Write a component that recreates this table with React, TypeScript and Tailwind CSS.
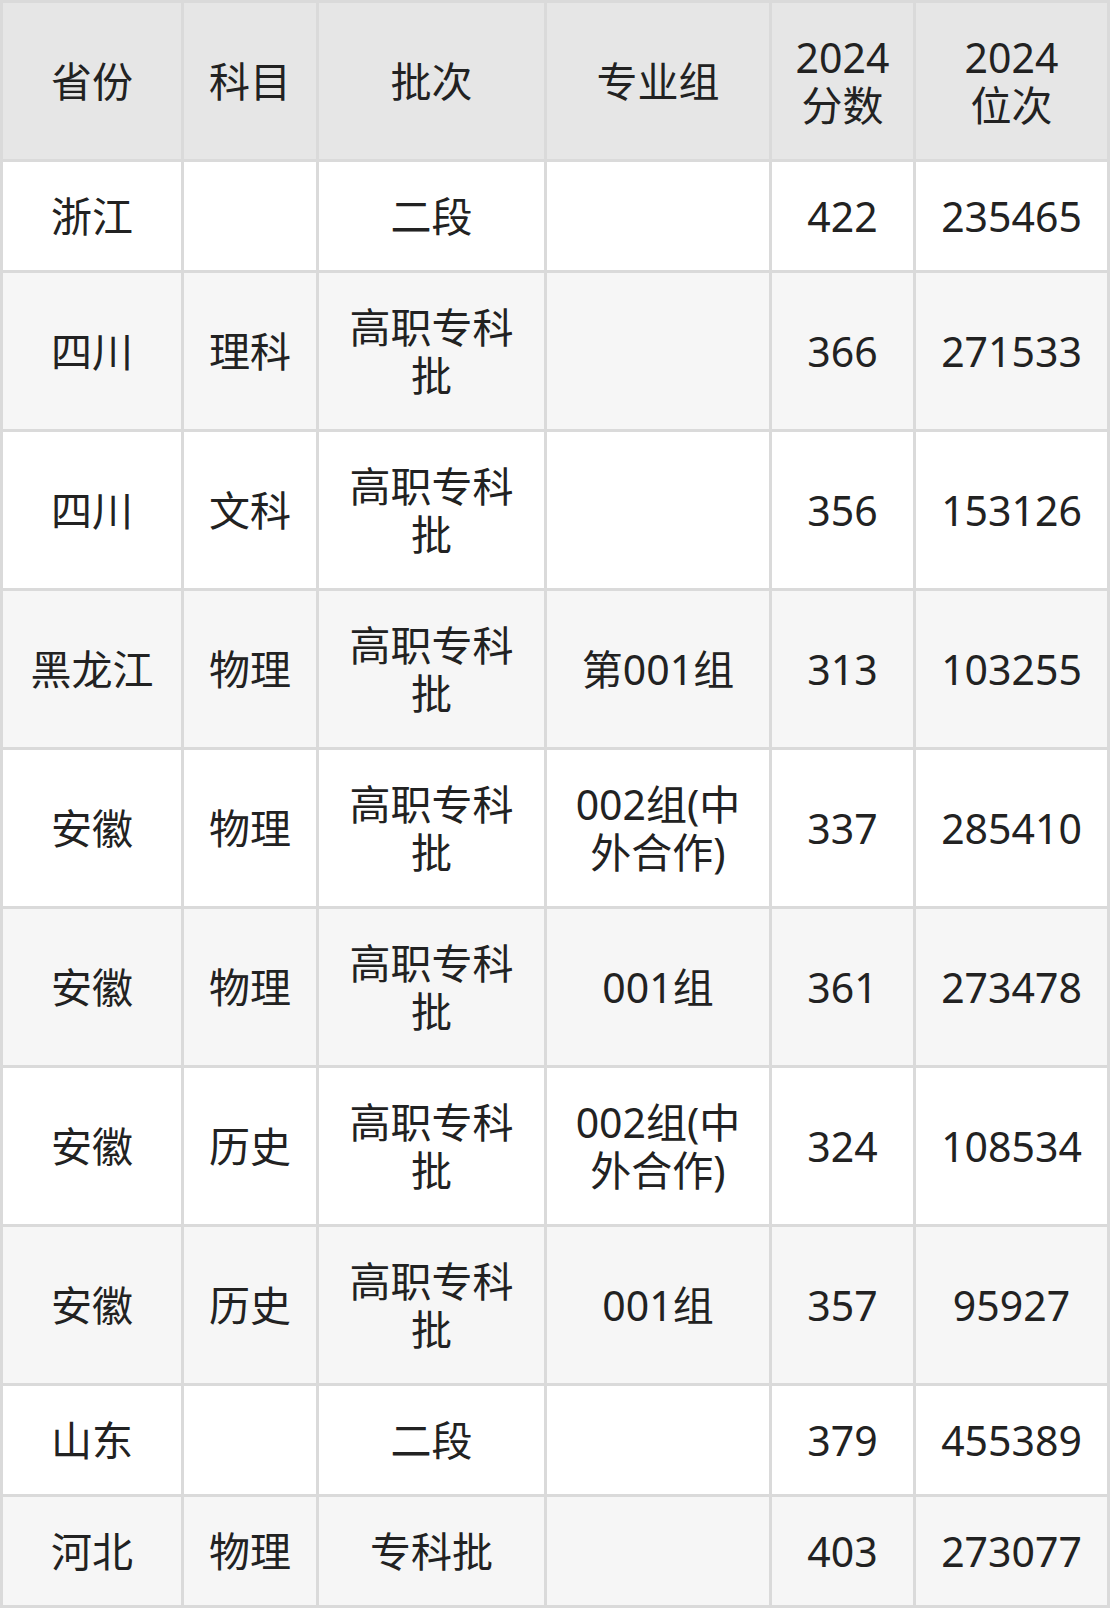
import React from "react";

type Row = { cells: string[][]; tall: boolean };

const header: string[][] = [["省份"], ["科目"], ["批次"], ["专业组"], ["2024", "分数"], ["2024", "位次"]];

const rows: Row[] = [
  { tall: false, cells: [["浙江"], [], ["二段"], [], ["422"], ["235465"]] },
  { tall: true, cells: [["四川"], ["理科"], ["高职专科", "批"], [], ["366"], ["271533"]] },
  { tall: true, cells: [["四川"], ["文科"], ["高职专科", "批"], [], ["356"], ["153126"]] },
  { tall: true, cells: [["黑龙江"], ["物理"], ["高职专科", "批"], ["第001组"], ["313"], ["103255"]] },
  { tall: true, cells: [["安徽"], ["物理"], ["高职专科", "批"], ["002组(中", "外合作)"], ["337"], ["285410"]] },
  { tall: true, cells: [["安徽"], ["物理"], ["高职专科", "批"], ["001组"], ["361"], ["273478"]] },
  { tall: true, cells: [["安徽"], ["历史"], ["高职专科", "批"], ["002组(中", "外合作)"], ["324"], ["108534"]] },
  { tall: true, cells: [["安徽"], ["历史"], ["高职专科", "批"], ["001组"], ["357"], ["95927"]] },
  { tall: false, cells: [["山东"], [], ["二段"], [], ["379"], ["455389"]] },
  { tall: false, cells: [["河北"], ["物理"], ["专科批"], [], ["403"], ["273077"]] },
];

function Cell({ lines, bg, h }: { lines: string[]; bg: string; h: string }) {
  return (
    <div className={`${bg} ${h} flex flex-col items-center justify-center px-2 text-center`}>
      {lines.map((l, i) => (
        <div key={i} className="whitespace-nowrap leading-[48px]">
          {l}
        </div>
      ))}
    </div>
  );
}

export default function App() {
  return (
    <div
      className="w-[1110px] bg-[#dadada] p-[3px] text-[41px] text-[#222222]"
      style={{ fontFamily: '"Noto Sans", "Noto Sans CJK SC", sans-serif' }}
    >
      <div className="grid grid-cols-[178px_132px_225px_222px_141px_191px] gap-[3px]">
        {header.map((c, i) => (
          <Cell key={`h${i}`} lines={c} bg="bg-[#e6e6e6]" h="h-[156px]" />
        ))}
        {rows.map((r, ri) =>
          r.cells.map((c, ci) => (
            <Cell
              key={`${ri}-${ci}`}
              lines={c}
              bg={ri % 2 === 0 ? "bg-white" : "bg-[#f6f6f6]"}
              h={r.tall ? "h-[156px]" : "h-[108px]"}
            />
          ))
        )}
      </div>
    </div>
  );
}
